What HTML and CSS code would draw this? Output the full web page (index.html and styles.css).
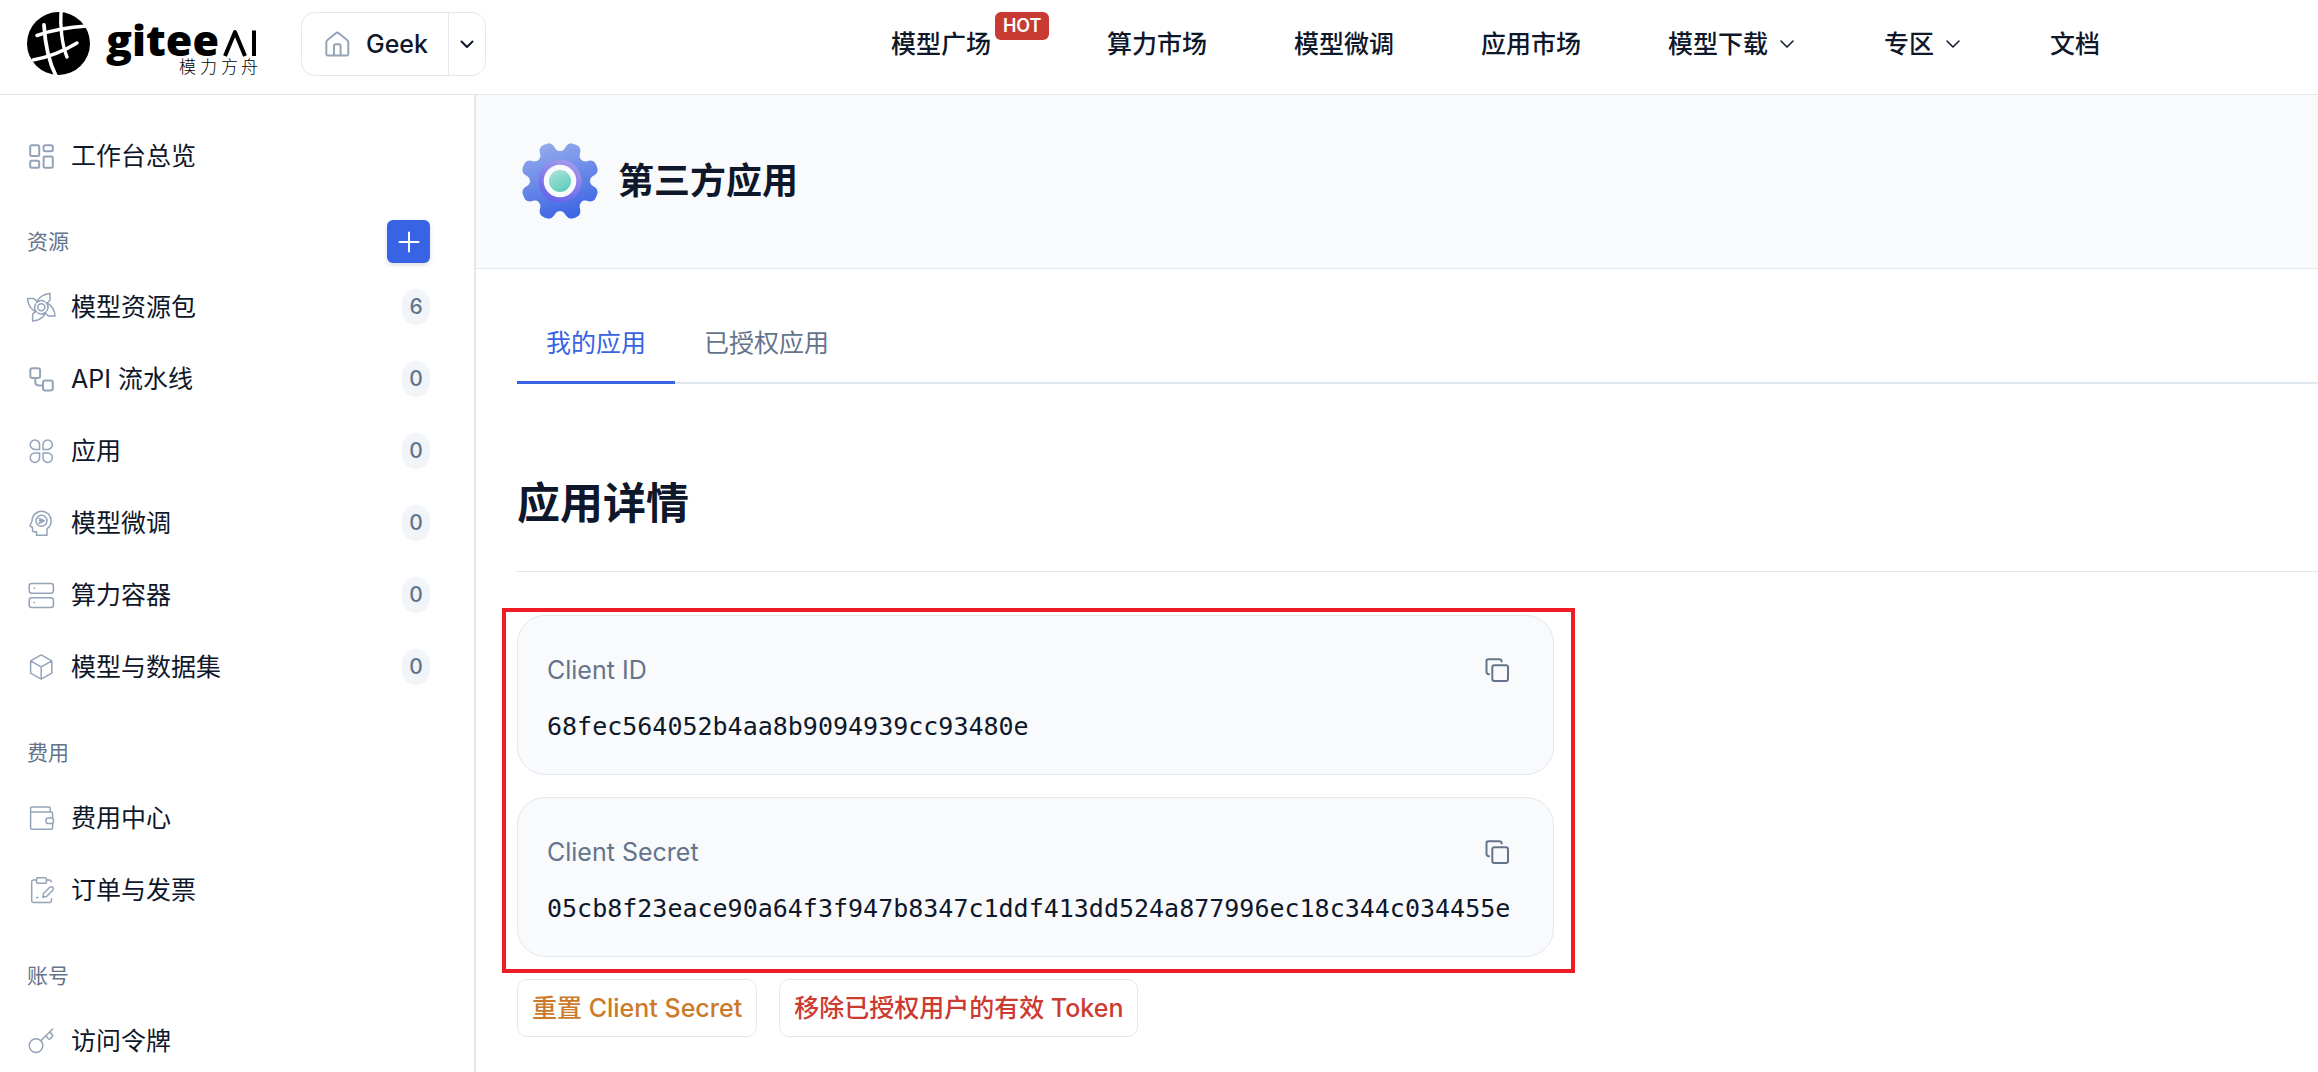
FILE: index.html
```html
<!DOCTYPE html>
<html lang="zh-CN">
<head>
    <meta charset="UTF-8">
    <meta name="viewport" content="width=device-width, initial-scale=1.0">
    <title>第三方应用</title>
    <link rel="stylesheet" href="styles.css">
</head>
<body>
    <header class="header">
        <a class="logo" href="#">
            <svg width="234" height="66" viewBox="0 0 234 66" role="img" aria-label="gitee AI 模力方舟">
                <circle cx="31.5" cy="31.5" r="31.5" fill="#000"/>
                <g fill="none" stroke="#fff" stroke-linecap="round">
                    <path d="M34 -1C33 14 35 33 40 45" stroke-width="3.4"/>
                    <path d="M17 13C18 31 21 48 29 64" stroke-width="3.8"/>
                    <path d="M10 23.500C25 18 42 15 60 14" stroke-width="3.6"/>
                    <path d="M6 48C22 45 37 39 50 31" stroke-width="3.4"/>
                </g>
                <text class="logo-name" x="79" y="44">gitee</text>
                <path d="M198 44l10-24 10 24M227 18.500V44" fill="none" stroke="#000" stroke-width="4" stroke-linecap="butt"/>
                <text class="logo-sub" x="152 173 194 214" y="61">模力方舟</text>
            </svg>
        </a>
        <div class="space">
            <button class="space-home" type="button">
                <svg class="icon" viewBox="0 0 30 30"><path d="M4.300 25V13.500q0-1.500 1.200-2.500l8.300-6.800q1.500-1.200 3 0L25.100 11q1.200 1 1.200 2.500V25q0 1.400-1.400 1.400H5.700q-1.400 0-1.400-1.400zM12 26.400V17q0-1.700 1.700-1.700h3.200q1.700 0 1.700 1.700v9.400"/></svg>
                Geek
            </button>
            <button class="space-more" type="button" aria-label="切换空间">
                <svg class="chevron" viewBox="0 0 20 20"><path d="M4.500 7.500l5.500 5.500 5.500-5.500"/></svg>
            </button>
        </div>
        <nav class="nav">
            <a class="nav-hot" href="#">模型广场<span class="hot">HOT</span></a>
            <a href="#">算力市场</a>
            <a href="#">模型微调</a>
            <a href="#">应用市场</a>
            <a href="#">模型下载<svg class="chevron thin" viewBox="0 0 20 20"><path d="M4 7l6 6 6-6"/></svg></a>
            <a href="#">专区<svg class="chevron thin" viewBox="0 0 20 20"><path d="M4 7l6 6 6-6"/></svg></a>
            <a href="#">文档</a>
        </nav>
    </header>

    <div class="page">
        <aside class="sidebar">
            <a class="item" href="#">
                <svg class="icon" viewBox="0 0 30 30"><rect x="4.200" y="4.200" width="9" height="10.800" rx="1.500"/><rect x="17.600" y="4.200" width="9.200" height="6" rx="1.500"/><rect x="4.200" y="19.800" width="9" height="7" rx="1.500"/><rect x="17.600" y="15.500" width="9.200" height="11.300" rx="1.500"/></svg>
                工作台总览
            </a>

            <div class="group">资源
                <button class="add" type="button" aria-label="新建资源">
                    <svg viewBox="0 0 22 22"><path d="M11 1.500v19M1.500 11h19"/></svg>
                </button>
            </div>
            <a class="item" href="#">
                <svg class="icon fine" viewBox="0 0 30 30">
                    <circle cx="15.300" cy="15.300" r="3.500"/>
                    <path id="blade" d="M10.800 10.500C12 6 17 2 24 1.500V8q-1 1.800-3.200 3.200M10.800 10.500a6.600 6.600 0 0 1 8 -.8"/>
                    <use href="#blade" transform="rotate(90 15.300 15.300)"/>
                    <use href="#blade" transform="rotate(180 15.300 15.300)"/>
                    <use href="#blade" transform="rotate(270 15.300 15.300)"/>
                </svg>
                模型资源包<span class="count">6</span>
            </a>
            <a class="item" href="#">
                <svg class="icon" viewBox="0 0 30 30"><rect x="4.300" y="4.300" width="9.800" height="9.600" rx="2.200"/><rect x="17" y="16.400" width="9.800" height="10" rx="2.200"/><path d="M9.300 14v4q0 3.400 3.400 3.400H17"/></svg>
                API 流水线<span class="count">0</span>
            </a>
            <a class="item" href="#">
                <svg class="icon fine" viewBox="0 0 30 30">
                    <path d="M13.600 13.400H9a4.700 4.700 0 1 1 4.600-4.700zM17 13.400h4.600A4.700 4.700 0 1 0 17 8.700zM13.600 17H9a4.700 4.700 0 1 0 4.600 4.700zM17 17h4.600A4.700 4.700 0 1 1 17 21.700z"/>
                </svg>
                应用<span class="count">0</span>
            </a>
            <a class="item" href="#">
                <svg class="icon fine" viewBox="0 0 30 30">
                    <path d="M10.500 27.200v-3.400H8.400q-1.900 0-1.900-1.900v-2.400L3.900 17.800 6 13.300C6 7.500 10.200 3.300 15.700 3.300c5.300 0 9.500 4.200 9.500 9.600 0 3.600-1.700 6-4.200 7.800v6.500z"/>
                    <circle cx="15.500" cy="12.800" r="5.500"/>
                    <path d="M13 10.500l5.300 2.300-5.300 2.500M13.500 12.800h2"/>
                </svg>
                模型微调<span class="count">0</span>
            </a>
            <a class="item" href="#">
                <svg class="icon fine" viewBox="0 0 30 30"><rect x="3.200" y="3.500" width="24.200" height="9.700" rx="2.400"/><rect x="3.200" y="17.700" width="24.200" height="9.700" rx="2.400"/><path d="M8.300 8v.6M8.300 22.200v.6"/></svg>
                算力容器<span class="count">0</span>
            </a>
            <a class="item" href="#">
                <svg class="icon fine" viewBox="0 0 30 30"><path d="M15.200 2.900l10.600 5.900v12.400l-10.600 5.900-10.600-5.900V8.800zM4.600 8.800l10.600 6 10.600-6M15.200 14.800v12.300"/></svg>
                模型与数据集<span class="count">0</span>
            </a>

            <div class="group">费用</div>
            <a class="item" href="#">
                <svg class="icon fine" viewBox="0 0 30 30"><path d="M24.300 9V5.500q0-1.400-1.400-1.400H6q-1.400 0-1.400 1.400v19.400q0 1.400 1.400 1.400h19.200q1.400 0 1.400-1.400v-4.200M4.600 9h20.600q1.400 0 1.400 1.400v4.400"/><rect x="20" y="15" width="7.500" height="5.600" rx="2.200"/></svg>
                费用中心
            </a>
            <a class="item" href="#">
                <svg class="icon fine" viewBox="0 0 30 30"><path d="M10.500 5H7.300Q5.700 5 5.700 6.600v19.200q0 1.600 1.600 1.600h16.500q1.600 0 1.600-1.600v-2M20.500 5h2.900q1.800 0 1.800 1.800M10.500 22.500h1.400"/><rect x="10.500" y="2.800" width="10" height="5.400" rx="1.200"/><path d="M16.800 22.300l.7-3.800 6.300-6.200q1.700-1.200 3 0 1.300 1.400 0 3l-6.300 6.200z"/></svg>
                订单与发票
            </a>

            <div class="group">账号</div>
            <a class="item" href="#">
                <svg class="icon fine" viewBox="0 0 30 30"><circle cx="10" cy="19.600" r="6.800"/><path d="M14.800 14.800L26.600 3M20.200 9.600l1.800 2.800q1 1.200 2.300.2l2-2q.9-1.200-.2-2.200l-2.300-2.300"/></svg>
                访问令牌
            </a>
        </aside>

        <main class="main">
            <div class="banner">
                <svg class="gear" viewBox="0 0 76 76">
                    <defs>
                        <linearGradient id="body" x1="0.300" y1="0" x2="0.600" y2="1"><stop offset="0" stop-color="#94abec"/><stop offset="1" stop-color="#3a64e3"/></linearGradient>
                        <linearGradient id="ring" x1="0.700" y1="0" x2="0.300" y2="1"><stop offset="0" stop-color="#a69bec"/><stop offset="1" stop-color="#6460ea"/></linearGradient>
                        <linearGradient id="core" x1="0.200" y1="0" x2="0.700" y2="1"><stop offset="0" stop-color="#a5e3d8"/><stop offset="1" stop-color="#5fccba"/></linearGradient>
                        <path id="tooth" d="M38 38L26.500 10.300C29.500 9 30 6.500 30.300 3.500Q31 .2 34-1.200Q38-2 42-1.200Q45 .2 45.700 3.500C46 6.500 46.500 9 49.500 10.300z"/>
                        <clipPath id="cog">
                            <circle cx="38" cy="38" r="29"/>
                            <use href="#tooth" transform="rotate(22.500 38 38)"/>
                            <use href="#tooth" transform="rotate(67.500 38 38)"/>
                            <use href="#tooth" transform="rotate(112.500 38 38)"/>
                            <use href="#tooth" transform="rotate(157.500 38 38)"/>
                            <use href="#tooth" transform="rotate(202.500 38 38)"/>
                            <use href="#tooth" transform="rotate(247.500 38 38)"/>
                            <use href="#tooth" transform="rotate(292.500 38 38)"/>
                            <use href="#tooth" transform="rotate(337.500 38 38)"/>
                        </clipPath>
                    </defs>
                    <rect width="76" height="76" fill="url(#body)" clip-path="url(#cog)"/>
                    <circle cx="38" cy="38" r="21.500" fill="url(#ring)"/>
                    <circle cx="38" cy="38" r="16.300" fill="#f8fafc"/>
                    <circle cx="38" cy="38" r="11" fill="url(#core)"/>
                </svg>
                <h1>第三方应用</h1>
            </div>

            <div class="content">
                <div class="tabs" role="tablist">
                    <button class="tab active" type="button" role="tab" aria-selected="true">我的应用</button>
                    <button class="tab" type="button" role="tab" aria-selected="false">已授权应用</button>
                </div>

                <h2>应用详情</h2>

                <div class="keys">
                    <div class="card">
                        <div class="card-top">
                            <span>Client ID</span>
                            <button class="copy" type="button" aria-label="复制 Client ID">
                                <svg viewBox="0 0 26 26"><rect x="8.300" y="8.300" width="15.700" height="15.700" rx="2"/><path d="M5 17.200Q2.500 17.200 2.500 14.800V4Q2.500 2.200 4.300 2.200h10.800q2.500 0 2.500 2.300"/></svg>
                            </button>
                        </div>
                        <code>68fec564052b4aa8b9094939cc93480e</code>
                    </div>
                    <div class="card">
                        <div class="card-top">
                            <span>Client Secret</span>
                            <button class="copy" type="button" aria-label="复制 Client Secret">
                                <svg viewBox="0 0 26 26"><rect x="8.300" y="8.300" width="15.700" height="15.700" rx="2"/><path d="M5 17.200Q2.500 17.200 2.500 14.800V4Q2.500 2.200 4.300 2.200h10.800q2.500 0 2.500 2.300"/></svg>
                            </button>
                        </div>
                        <code>05cb8f23eace90a64f3f947b8347c1ddf413dd524a877996ec18c344c034455e</code>
                    </div>
                </div>

                <div class="actions">
                    <button class="reset" type="button">重置 Client Secret</button>
                    <button class="remove" type="button">移除已授权用户的有效 Token</button>
                </div>
            </div>
        </main>
    </div>
</body>
</html>
```
FILE: styles.css
```css
*{
    margin:0;
    padding:0;
    box-sizing:border-box;
}
body{
    height:100vh;
    display:flex;
    flex-direction:column;
    overflow:hidden;
    background:#fff;
    color:#0f172a;
    font-family:Inter, "Noto Sans CJK SC", sans-serif;
    font-size:25px;
    line-height:36px;
}
a{
    color:inherit;
    text-decoration:none;
}
button{
    font:inherit;
    color:inherit;
    background:none;
    border:none;
    cursor:pointer;
}
svg{
    flex-shrink:0;
    fill:none;
    stroke-linecap:round;
    stroke-linejoin:round;
}

/* header */
.header{
    display:flex;
    align-items:center;
    flex-shrink:0;
    padding:12px 218px 18px 27px;
    border-bottom:1px solid #e2e8f0;
}
.logo{
    display:flex;
    height:64px;
}
.logo svg{
    overflow:visible;
}
.logo-name{
    font:800 43px "Open Sans", sans-serif;
    fill:#000;
}
.logo-sub{
    font:300 17px "Noto Sans CJK SC", sans-serif;
    fill:#000;
}
.space{
    display:flex;
    height:64px;
    margin-left:40px;
    border:1px solid #e2e8f0;
    border-radius:14px;
    font-weight:500;
}
.space-home{
    display:flex;
    align-items:center;
    gap:14px;
    padding:0 20px;
}
.space-more{
    display:flex;
    align-items:center;
    padding:0 8px;
    border-left:1px solid #e2e8f0;
}
.chevron{
    width:20px;
    height:20px;
    stroke:#0f172a;
    stroke-width:2;
}
.thin{
    margin-left:9px;
    stroke-width:1.500;
}
.nav{
    display:flex;
    gap:87px;
    margin-left:auto;
    font-weight:500;
}
.nav a{
    display:flex;
    align-items:center;
    white-space:nowrap;
}
.nav .nav-hot{
    position:relative;
    margin-right:29px;
}
.hot{
    position:absolute;
    left:104px;
    top:-14px;
    padding:0 8px;
    border-radius:6px;
    background:#c93a32;
    color:#fff;
    font-size:18px;
    font-weight:600;
    line-height:28px;
}

/* sidebar */
.page{
    display:flex;
    flex:1;
    min-height:0;
}
.sidebar{
    width:476px;
    flex-shrink:0;
    padding:25px 44px 0 26px;
    border-right:2px solid #e2e8f0;
    overflow:hidden;
}
.item{
    display:flex;
    align-items:center;
    gap:15px;
    height:72px;
}
.icon{
    width:30px;
    height:30px;
    stroke:#94a3b8;
    stroke-width:2;
}
.fine{
    stroke-width:1.500;
}
.count{
    margin-left:auto;
    min-width:28px;
    border-radius:14px;
    background:#f1f5f9;
    color:#64748b;
    font-size:21px;
    font-weight:500;
    text-align:center;
}
.group{
    display:flex;
    align-items:center;
    justify-content:space-between;
    height:43px;
    margin:28px 0 8px;
    padding-left:1px;
    color:#64748b;
    font-size:21px;
}
.add{
    display:flex;
    align-items:center;
    justify-content:center;
    width:43px;
    height:43px;
    border-radius:6px;
    background:#3763e4;
    box-shadow:0 2px 4px rgba(15, 23, 42, 0.15);
}
.add svg{
    width:22px;
    height:22px;
    stroke:#fff;
    stroke-width:2;
}

/* main */
.main{
    flex:1;
    min-width:0;
}
.banner{
    display:flex;
    align-items:center;
    gap:20px;
    height:174px;
    padding:0 46px 2px;
    border-bottom:1px solid #e2e8f0;
    background:#f8fafc;
}
.gear{
    width:76px;
    height:76px;
    overflow:visible;
}
h1{
    font-size:36px;
    font-weight:600;
}
.content{
    padding:36px 0 0 41px;
}
.tabs{
    display:flex;
    height:79px;
    box-shadow:inset 0 -2px #e2e8f0;
}
.tab{
    padding:0 29px;
    border-bottom:3px solid transparent;
    color:#64748b;
}
.tab.active{
    border-color:#3763e4;
    color:#3763e4;
}
h2{
    padding:86px 0 35px;
    border-bottom:1px solid #e5e7eb;
    font-size:43px;
    font-weight:600;
    line-height:66px;
}
.keys{
    position:relative;
    display:flex;
    flex-direction:column;
    gap:22px;
    max-width:1037px;
    margin-top:43px;
}
/* red frame around both keys */
.keys::after{
    content:"";
    position:absolute;
    inset:-7px -21px -16px -15px;
    border:4px solid #ee1c24;
    pointer-events:none;
}
.card{
    padding:29px;
    border:1px solid #e2e8f0;
    border-radius:28px;
    background:#f8fafc;
}
.card-top{
    display:flex;
    align-items:center;
    justify-content:space-between;
    height:50px;
    margin-bottom:14px;
    color:#64748b;
}
.copy{
    display:flex;
    align-items:center;
    padding:12px 14px;
}
.copy svg{
    width:26px;
    height:26px;
    stroke:#64748b;
    stroke-width:2;
}
code{
    display:block;
    font-family:"DejaVu Sans Mono", monospace;
    font-size:25px;
}
.actions{
    display:flex;
    gap:22px;
    margin-top:22px;
}
.actions button{
    height:58px;
    padding:0 14px;
    border:1px solid #e2e8f0;
    border-radius:10px;
    font-weight:500;
}
.actions .reset{
    color:#cc7a29;
}
.actions .remove{
    color:#cc3a31;
}
```
